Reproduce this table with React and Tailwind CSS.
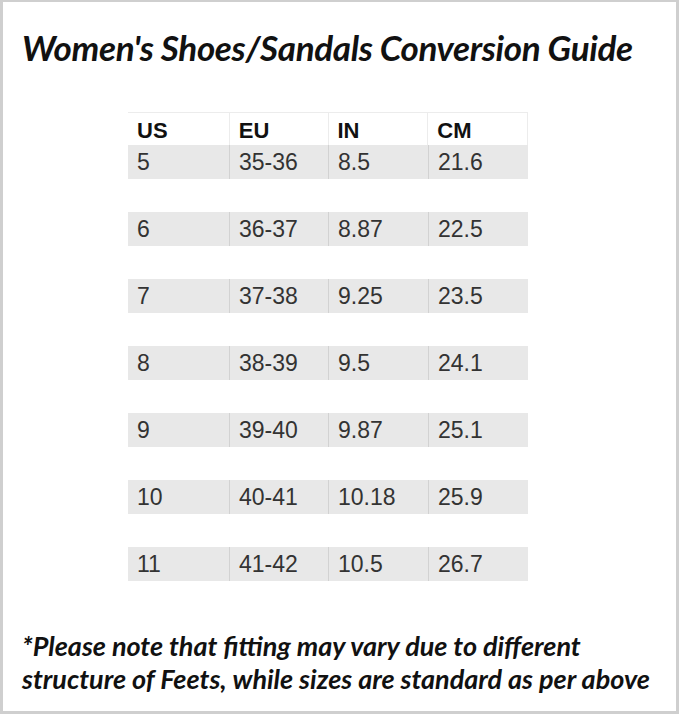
const rows = [
  ["5", "35-36", "8.5", "21.6"],
  ["6", "36-37", "8.87", "22.5"],
  ["7", "37-38", "9.25", "23.5"],
  ["8", "38-39", "9.5", "24.1"],
  ["9", "39-40", "9.87", "25.1"],
  ["10", "40-41", "10.18", "25.9"],
  ["11", "41-42", "10.5", "26.7"],
];

const cols = ["w-[101px]", "w-[99px]", "w-[100px]", "w-[100px]"];

const SizeRow = ({ cells, header }) => (
  <div
    className={
      header
        ? "flex w-[400px] h-[33px] bg-white border-t border-r border-[#ececec]"
        : "flex w-[400px] h-[34px] bg-[#e8e8e8]"
    }
  >
    {cells.map((c, i) => (
      <div
        key={i}
        className={`${cols[i]} flex items-center pl-[9px] ${
          i > 0 ? (header ? "border-l border-[#ececec]" : "border-l border-[#d2d2d2]") : ""
        } ${header ? "font-bold text-[22px] text-[#111] pt-[3px]" : "text-[23px] text-[#333]"}`}
      >
        {c}
      </div>
    ))}
  </div>
);

export default function App() {
  return (
    <div className="w-[682px] h-[720px] bg-white">
      <div className="w-[679px] h-[714px] border-[3px] border-t-2 border-[#cfcfcf] bg-white flex flex-col items-start">
        <h1 className="pl-[19px] pt-[23px] font-['Lato',sans-serif] italic font-bold text-[35px] leading-[44px] text-[#111] tracking-[-0.35px]">
          Women's Shoes/Sandals Conversion Guide
        </h1>
        <div className="pl-[125px] pt-[43px] font-['Liberation_Sans',Arial,sans-serif] flex flex-col">
          <SizeRow header cells={["US", "EU", "IN", "CM"]} />
          {rows.map((r, i) => (
            <div key={i} className={i > 0 ? "pt-[33px]" : ""}>
              <SizeRow cells={r} />
            </div>
          ))}
        </div>
        <p className="pl-[19px] pt-[48px] font-['Lato',sans-serif] italic font-bold text-[27px] leading-[33px] text-[#111]">
          *Please note that fitting may vary due to different
          <br />
          structure of Feets, while sizes are standard as per above
        </p>
      </div>
    </div>
  );
}
